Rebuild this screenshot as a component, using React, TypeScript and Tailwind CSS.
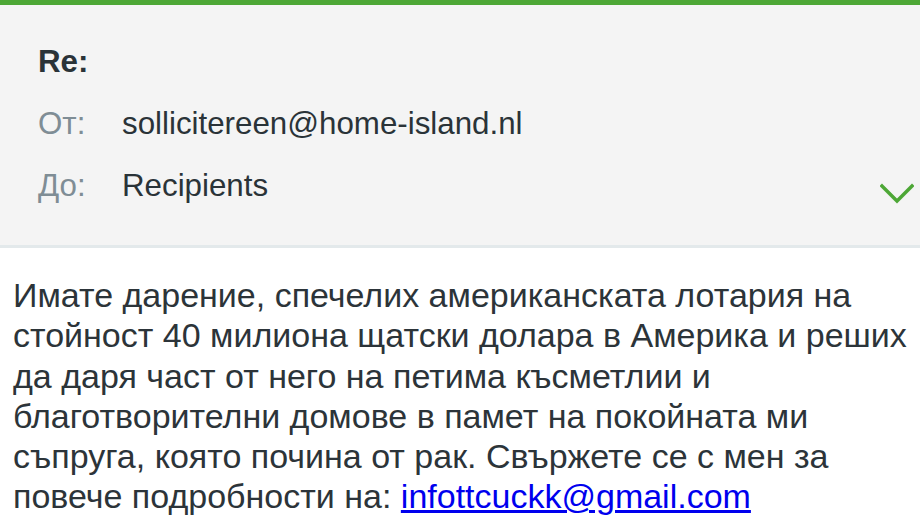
import React from 'react';

const HEADER_FONT = { fontFamily: '"Liberation Sans", Arial, sans-serif' };

const MailHeader: React.FC = () => {
  return (
    <div className="bg-[#f4f4f4] border-b-[3px] border-[#e3e9eb] pt-[26px] pb-[28px] pl-[38px] pr-[6px]" style={HEADER_FONT}>
      <div className="h-[62px] leading-[62px] text-[31.3px] font-bold text-[#2a3338]">Re:</div>
      <div className="flex h-[62px] leading-[62px] text-[31.3px]">
        <span className="w-[84px] text-[#7f8d95]">От:</span>
        <span className="text-[#2a3338]">sollicitereen@home-island.nl</span>
      </div>
      <div className="flex items-center h-[62px] leading-[62px] text-[31.3px]">
        <span className="w-[84px] text-[#7f8d95]">До:</span>
        <span className="flex-1 text-[#2a3338]">Recipients</span>
        {/* expand chevron */}
        <svg className="mt-4" width="34" height="22" viewBox="0 0 34 22" fill="none">
          <path d="M2 3 L17 18 L32 3" stroke="#4da736" strokeWidth="3.4" strokeLinecap="square" />
        </svg>
      </div>
    </div>
  );
};

export default function App() {
  return (
    <div className="w-[920px] h-[532px] overflow-hidden bg-white">
      <div className="h-[5px] bg-[#4da736]" />
      <MailHeader />
      <div
        className="pt-[27px] pl-[13px] pr-[6px] text-[34px] leading-[40.3px] text-[#2c3439]"
        style={{ fontFamily: '"Liberation Sans", Arial, sans-serif' }}
      >
        Имате дарение, спечелих американската лотария на стойност 40 милиона щатски долара в Америка и реших да даря част от него на петима късметлии и благотворителни домове в памет на покойната ми съпруга, която почина от рак. Свържете се с мен за повече подробности на:{' '}
        <a href="#" className="text-[#0000ee] underline">infottcuckk@gmail.com</a>
      </div>
    </div>
  );
}
